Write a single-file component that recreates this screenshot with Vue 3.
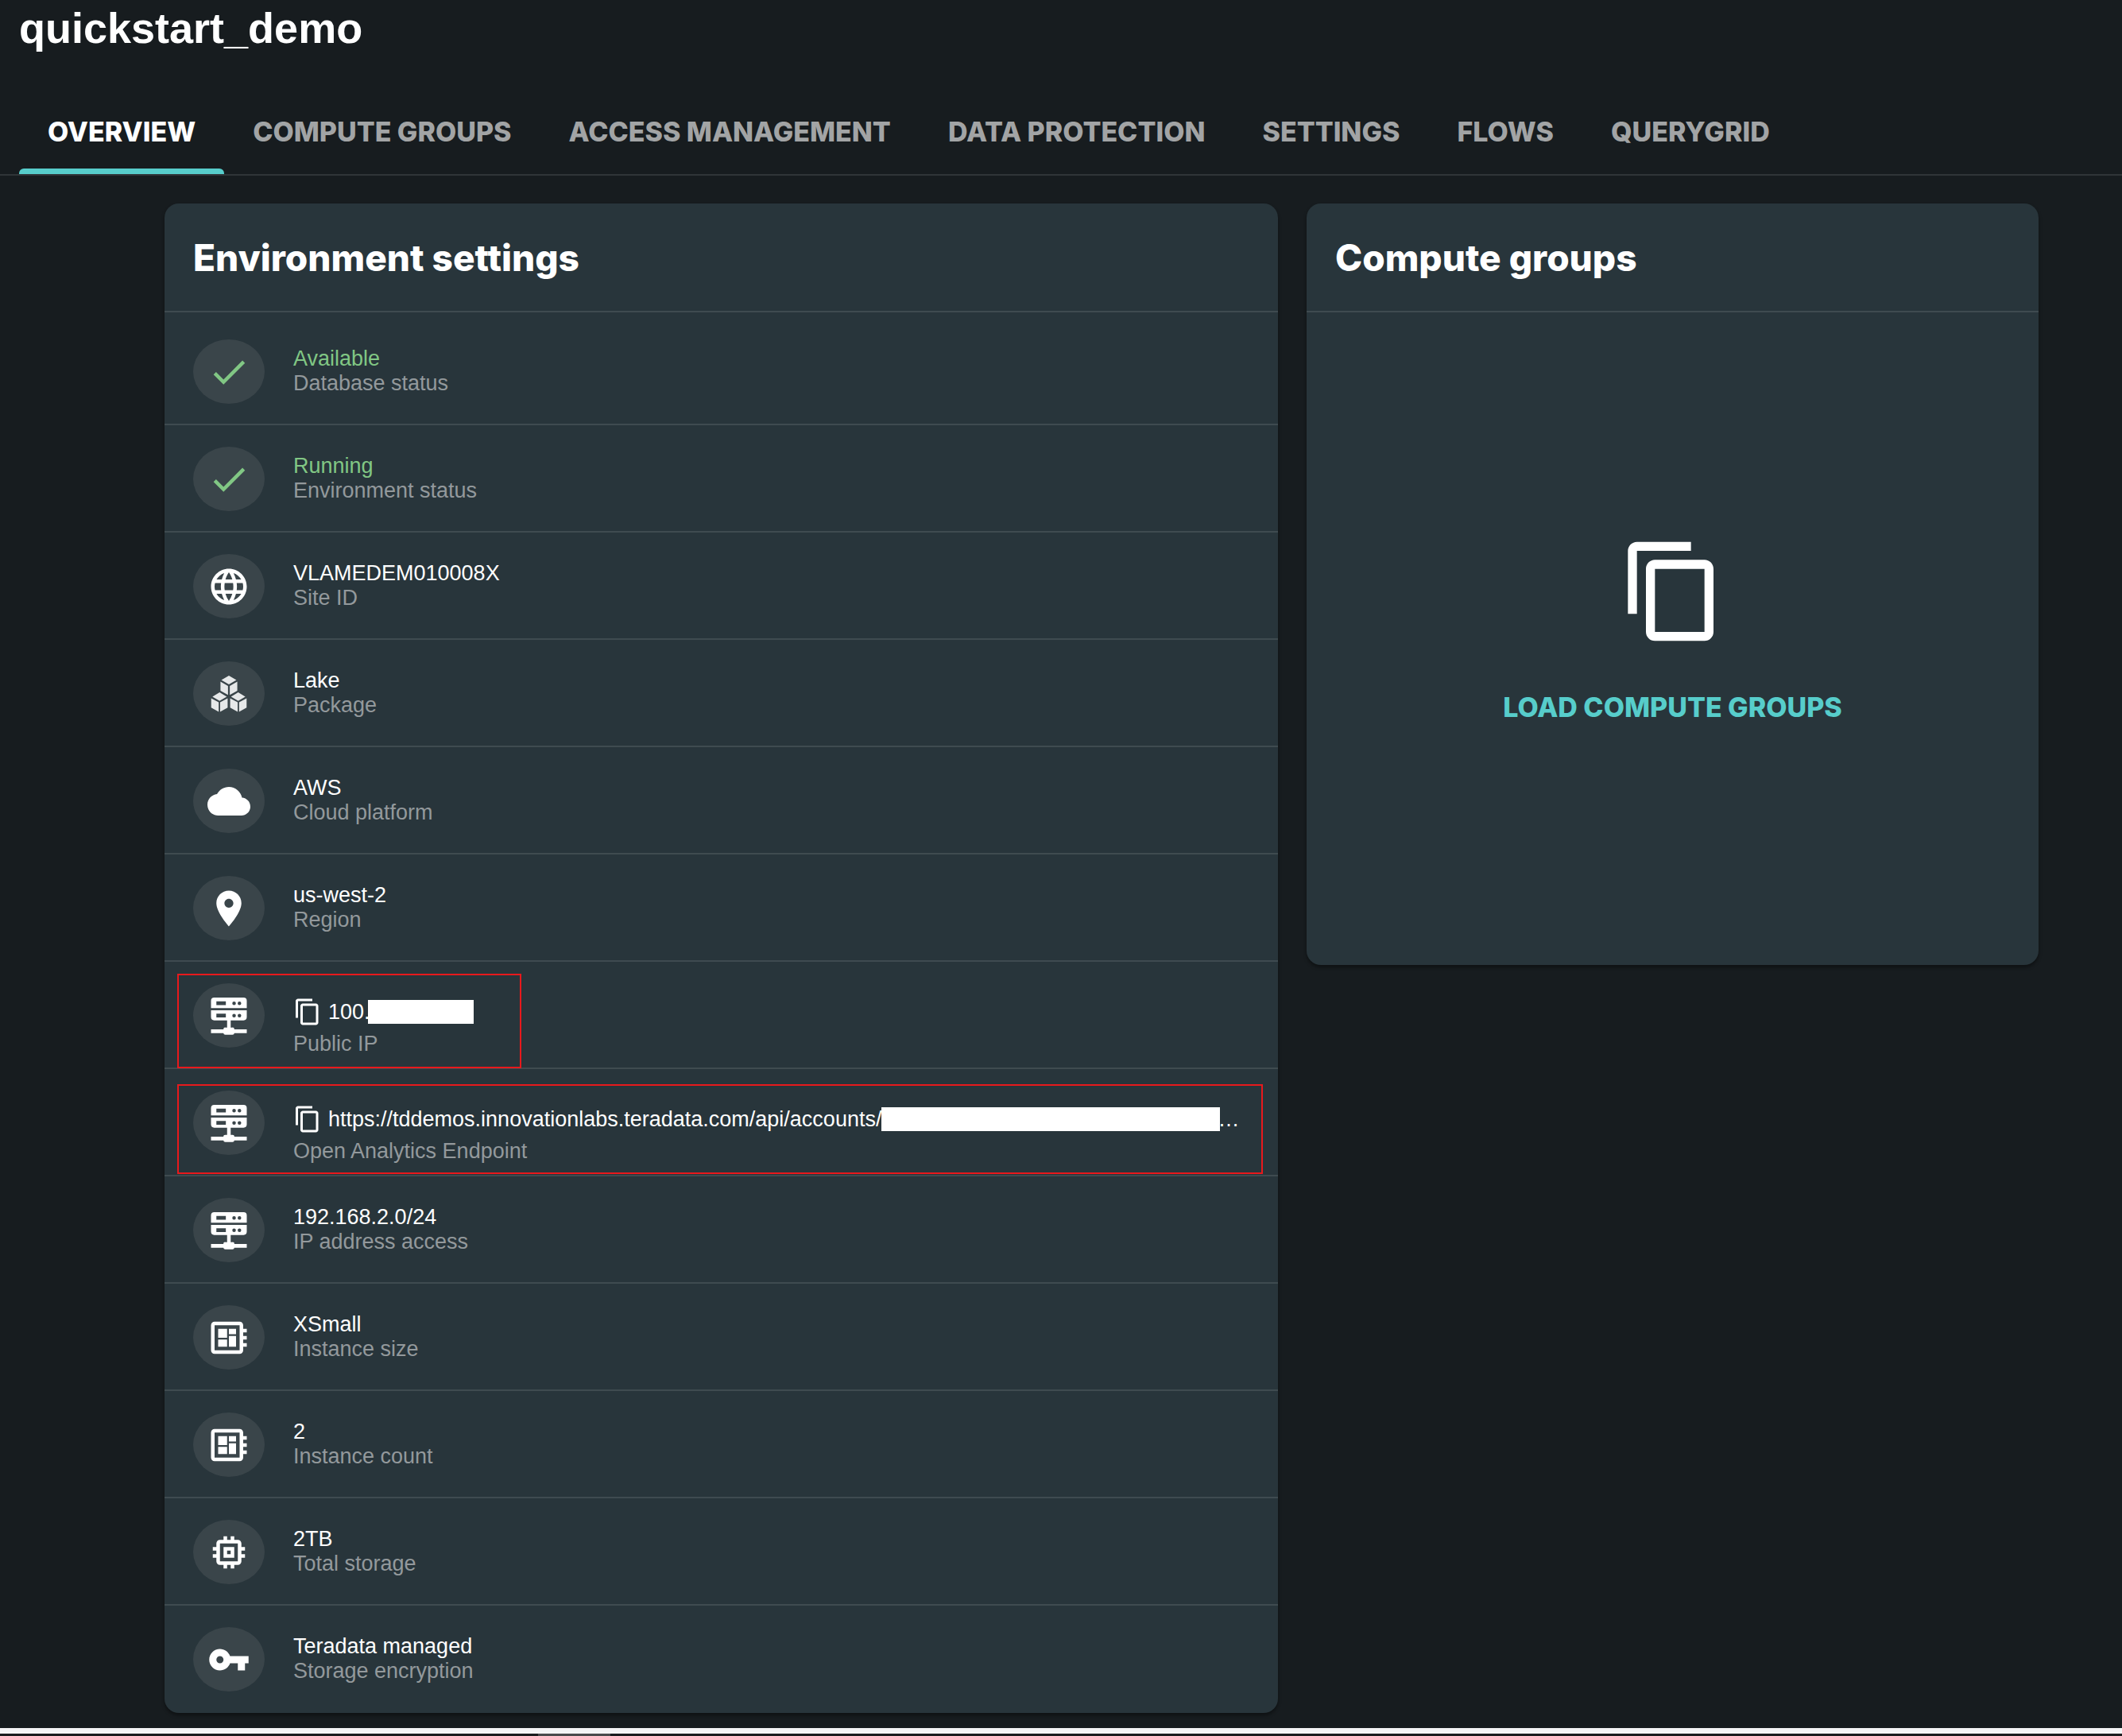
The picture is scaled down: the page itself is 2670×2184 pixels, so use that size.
<script setup>
const paths = {
  check: 'M9 16.17 4.83 12l-1.42 1.41L9 19 21 7l-1.41-1.41z',
  globe: 'M11.99 2C6.47 2 2 6.48 2 12s4.47 10 9.99 10C17.52 22 22 17.52 22 12S17.52 2 11.99 2zm6.93 6h-2.95c-.32-1.25-.78-2.45-1.38-3.56 1.84.63 3.37 1.91 4.33 3.56zM12 4.04c.83 1.2 1.48 2.53 1.91 3.96h-3.82c.43-1.43 1.08-2.76 1.91-3.96zM4.26 14C4.1 13.36 4 12.69 4 12s.1-1.36.26-2h3.38c-.08.66-.14 1.32-.14 2s.06 1.34.14 2H4.26zm.82 2h2.95c.32 1.25.78 2.45 1.38 3.56-1.84-.63-3.37-1.9-4.33-3.56zm2.95-8H5.08c.96-1.66 2.49-2.93 4.33-3.56C8.81 5.55 8.35 6.75 8.03 8zM12 19.96c-.83-1.2-1.48-2.53-1.91-3.96h3.82c-.43 1.43-1.08 2.76-1.91 3.96zM14.34 14H9.66c-.09-.66-.16-1.32-.16-2s.07-1.35.16-2h4.68c.09.65.16 1.32.16 2s-.07 1.34-.16 2zm.25 5.56c.6-1.11 1.06-2.31 1.38-3.56h2.95c-.96 1.65-2.49 2.93-4.33 3.56zM16.36 14c.08-.66.14-1.32.14-2s-.06-1.34-.14-2h3.38c.16.64.26 1.31.26 2s-.1 1.36-.26 2h-3.38z',
  cubes: 'M12 1.800l4.200 2.400L12 6.700 7.800 4.200zM7.300 5.100l4.200 2.400v5L7.300 10.200zM16.700 5.100l-4.200 2.400v5l4.200-2.300zM6.800 11.100l4 2.400-4 2.400-4-2.400zM2.100 14.400l4.200 2.300V22l-4.200-2.300zM11.300 14.400l-4.200 2.300V22l4.200-2.300zM17.200 11.100l4 2.400-4 2.400-4-2.400zM12.700 14.400l4.200 2.300V22l-4.200-2.300zM21.900 14.400l-4.200 2.300V22l4.200-2.300z',
  cloud: 'M19.35 10.04C18.67 6.59 15.64 4 12 4 9.11 4 6.6 5.64 5.35 8.04 2.34 8.36 0 10.91 0 14c0 3.31 2.69 6 6 6h13c2.76 0 5-2.24 5-5 0-2.64-2.05-4.78-4.65-4.96z',
  pin: 'M12 2C8.130 2 5 5.130 5 9c0 5.250 7 13 7 13s7-7.750 7-13c0-3.870-3.130-7-7-7zm0 9.500c-1.380 0-2.500-1.120-2.500-2.500s1.120-2.500 2.500-2.500 2.500 1.120 2.500 2.500-1.120 2.500-2.500 2.500z',
  server: 'M3.800 1.750h16.400A1.800 1.800 0 0 1 22 3.550v4.150H2V3.550a1.800 1.800 0 0 1 1.800-1.800zM5 3.900V6h5.300V3.900zM14.900 3.950a1 1 0 0 0 0 2 1 1 0 0 0 0-2zM17.900 3.950a1 1 0 0 0 0 2 1 1 0 0 0 0-2zM2 8.850h20v3.850a1.800 1.800 0 0 1-1.800 1.800H13v4h1a1.050 1.050 0 0 1 1.050 1.100H22v2.050h-6.950a1.050 1.050 0 0 1-1.050.95h-4a1.050 1.050 0 0 1-1.050-.95H2V19.600h6.950A1.050 1.050 0 0 1 10 18.500h1v-4H3.800A1.800 1.800 0 0 1 2 12.700zM5 10.800v2.100h5.300v-2.100zM14.900 10.850a1 1 0 0 0 0 2 1 1 0 0 0 0-2zM17.900 10.850a1 1 0 0 0 0 2 1 1 0 0 0 0-2z',
  board: 'M22 9V7h-2V5c0-1.100-.9-2-2-2H4c-1.100 0-2 .9-2 2v14c0 1.100.9 2 2 2h14c1.100 0 2-.9 2-2v-2h2v-2h-2v-2h2v-2h-2V9h2zm-4 10H4V5h14v14zM6 13h5v4H6zm6-6h4v3h-4zM6 7h5v5H6zm6 4h4v6h-4z',
  chip: 'M15 9H9v6h6V9zm-2 4h-2v-2h2v2zm8-2V9h-2V7c0-1.100-.9-2-2-2h-2V3h-2v2h-2V3H9v2H7c-1.100 0-2 .9-2 2v2H3v2h2v2H3v2h2v2c0 1.100.9 2 2 2h2v2h2v-2h2v2h2v-2h2c1.100 0 2-.9 2-2v-2h2v-2h-2v-2h2zm-4 6H7V7h10v10z',
  key: 'M12.650 10C11.830 7.670 9.610 6 7 6c-3.310 0-6 2.690-6 6s2.690 6 6 6c2.610 0 4.830-1.670 5.650-4H17v4h4v-4h2v-4H12.650zM7 14c-1.100 0-2-.9-2-2s.9-2 2-2 2 .9 2 2-.9 2-2 2z',
  copy: 'M16 1H4c-1.100 0-2 .9-2 2v14h2V3h12V1zm3 4H8c-1.100 0-2 .9-2 2v14c0 1.100.9 2 2 2h11c1.100 0 2-.9 2-2V7c0-1.100-.9-2-2-2zm0 16H8V7h11v14z',
}

const tabs = ['Overview', 'Compute groups', 'Access management', 'Data protection', 'Settings', 'Flows', 'QueryGrid']

const settings = [
  { icon: 'check', value: 'Available', label: 'Database status', ok: true },
  { icon: 'check', value: 'Running', label: 'Environment status', ok: true },
  { icon: 'globe', value: 'VLAMEDEM010008X', label: 'Site ID' },
  { icon: 'cubes', value: 'Lake', label: 'Package' },
  { icon: 'cloud', value: 'AWS', label: 'Cloud platform' },
  { icon: 'pin', value: 'us-west-2', label: 'Region' },
  { icon: 'server', value: '100.', label: 'Public IP', copy: 'ip' },
  { icon: 'server', value: 'https://tddemos.innovationlabs.teradata.com/api/accounts/', label: 'Open Analytics Endpoint', copy: 'endpoint' },
  { icon: 'server', value: '192.168.2.0/24', label: 'IP address access' },
  { icon: 'board', value: 'XSmall', label: 'Instance size' },
  { icon: 'board', value: '2', label: 'Instance count' },
  { icon: 'chip', value: '2TB', label: 'Total storage' },
  { icon: 'key', value: 'Teradata managed', label: 'Storage encryption' },
]
</script>

<template>
  <div class="page">
    <h1 class="title">quickstart_demo</h1>

    <nav class="tabs">
      <a v-for="(tab, i) in tabs" :key="tab" href="#" class="tab" :class="{ active: i === 0 }">{{ tab }}</a>
    </nav>

    <main class="content">
      <section class="card">
        <h2 class="card-title">Environment settings</h2>
        <ul class="list">
          <li v-for="s in settings" :key="s.label" class="row">
            <span class="avatar">
              <svg class="icon" :class="[s.icon, { ok: s.ok }]" viewBox="0 0 24 24" aria-hidden="true">
                <path :d="paths[s.icon]" fill-rule="evenodd" />
              </svg>
            </span>
            <div class="text">
              <div class="value" :class="{ ok: s.ok, copyable: s.copy }">
                <button v-if="s.copy" type="button" class="copy" :aria-label="'Copy ' + s.label">
                  <svg viewBox="0 0 24 24" aria-hidden="true"><path :d="paths.copy" /></svg>
                </button>
                <span>{{ s.value }}</span>
                <span v-if="s.copy" class="redacted" :class="s.copy"></span>
                <span v-if="s.copy === 'endpoint'" class="more">…</span>
              </div>
              <div class="label">{{ s.label }}</div>
            </div>
            <span v-if="s.copy" class="highlight" :class="s.copy"></span>
          </li>
        </ul>
      </section>

      <section class="card">
        <h2 class="card-title">Compute groups</h2>
        <div class="empty">
          <svg class="empty-icon" viewBox="0 0 24 24" aria-hidden="true"><path :d="paths.copy" /></svg>
          <button type="button" class="load">Load compute groups</button>
        </div>
      </section>
    </main>

    <footer class="edge"><span class="thumb"></span></footer>
  </div>
</template>

<style>
body {
  background: #171c1f;
}
</style>

<style scoped>
.page {
  color: #fff;
  font-family: "Liberation Sans", Arial, sans-serif;
  font-size: 27px;
  line-height: 31px;
}

.title {
  margin: 0;
  padding: 4px 24px 0;
  font-size: 54px;
  line-height: 62px;
}

.tabs {
  display: flex;
  margin-top: 45px;
  padding-left: 24px;
  border-bottom: 2px solid #303538;
}

.tab {
  padding: 8px 36px 0;
  border-bottom: 7px solid transparent;
  color: #a2a4a5;
  font-family: Inter, sans-serif;
  font-size: 34px;
  font-weight: 800;
  line-height: 93px;
  text-decoration: none;
  text-transform: uppercase;
  white-space: nowrap;
}

.tab.active {
  position: relative;
  color: #fff;
}

.tab.active::after {
  content: "";
  position: absolute;
  inset: auto 0 -7px;
  height: 7px;
  border-radius: 6px 6px 0 0;
  background: #57cdcb;
}

.content {
  display: grid;
  grid-template-columns: 1401fr 921fr;
  align-items: start;
  gap: 36px;
  padding: 35px 105px 19px 207px;
}

.card {
  min-width: 0;
  border-radius: 18px;
  background: #28353b;
  box-shadow: 0 3px 4px rgba(0, 0, 0, 0.4);
}

.card-title {
  margin: 0;
  padding: 2px 36px 0;
  border-bottom: 2px solid #3f4b50;
  font-family: Inter, sans-serif;
  font-size: 46px;
  font-weight: 800;
  line-height: 133px;
}

.list {
  margin: 0;
  padding: 7px 0 0;
  list-style: none;
}

.row {
  position: relative;
  display: flex;
  gap: 36px;
  padding: 27px 36px 25px;
  border-bottom: 2px solid #3f4b50;
}

.row:last-child {
  border-color: transparent;
}

.avatar {
  display: flex;
  flex: none;
  align-items: center;
  justify-content: center;
  width: 90px;
  height: 81px;
  border-radius: 50%;
  background: #3a454a;
}

.icon {
  width: 54px;
  height: 54px;
  fill: #fff;
}

.icon.cubes {
  fill: #e6e8e9;
}

.icon.ok {
  fill: #81c784;
}

/* Taller values may reach into the row's bottom padding. */
.text {
  min-width: 0;
  margin-bottom: -25px;
  padding-top: 9px;
}

.value.ok {
  color: #81c784;
}

.value.copyable {
  display: flex;
  align-items: center;
  padding: 9px 0 7px;
  white-space: nowrap;
}

.label {
  color: #93999c;
}

.copy {
  display: flex;
  margin: 0 8px 0 0;
  padding: 0;
  border: 0;
  background: none;
}

.copy svg {
  width: 36px;
  height: 36px;
  fill: #fff;
}

.redacted {
  height: 30px;
  background: #fff;
}

.redacted.ip {
  width: 133px;
  margin-left: -3px;
}

.redacted.endpoint {
  width: 426px;
}

.more {
  margin-left: -3px;
}

.highlight {
  position: absolute;
  box-sizing: border-box;
  border: 2px solid #e8191c;
}

.highlight.ip {
  top: 15px;
  left: 16px;
  width: 433px;
  height: 119px;
}

.highlight.endpoint {
  top: 19px;
  right: 19px;
  left: 16px;
  height: 113px;
}

.empty {
  display: flex;
  flex-direction: column;
  align-items: center;
  gap: 35px;
  padding: 283px 36px;
}

.empty-icon {
  width: 136px;
  height: 136px;
  fill: #fff;
}

.load {
  height: 84px;
  padding: 0 24px;
  border: 0;
  background: none;
  color: #57cdcb;
  font-family: Inter, sans-serif;
  font-size: 34px;
  font-weight: 800;
  text-transform: uppercase;
  white-space: nowrap;
}

.edge {
  height: 3px;
  padding-left: 677px;
  border-top: 7px solid #f4f4f5;
  background: #1a1c1e;
}

.thumb {
  display: block;
  width: 91px;
  height: 3px;
  background: #4a4b4c;
}
</style>
